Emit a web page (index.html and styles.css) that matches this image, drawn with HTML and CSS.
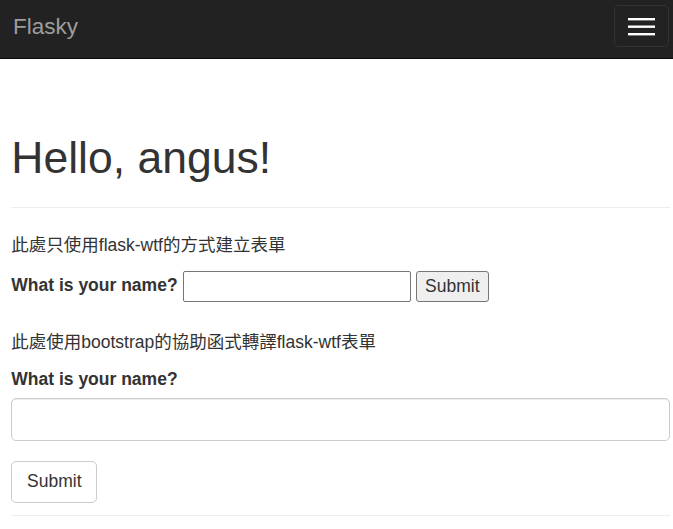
FILE: index.html
```html
<!DOCTYPE html>
<html lang="zh-Hant">
<head>
<meta charset="utf-8">
<title>Flasky</title>
<link rel="stylesheet" href="styles.css">
</head>
<body>
<nav class="navbar">
  <a class="brand" href="#">Flasky</a>
  <button class="toggle" type="button" aria-label="Toggle navigation">
    <svg width="27" height="20" viewBox="0 0 27 20" aria-hidden="true">
      <rect x="0" y="1" width="27" height="2.4" fill="#fff"/>
      <rect x="0" y="8.5" width="27" height="2.4" fill="#fff"/>
      <rect x="0" y="16" width="27" height="2.4" fill="#fff"/>
    </svg>
  </button>
</nav>
<main class="container">
  <div class="page-header">
    <h1>Hello, angus!</h1>
  </div>
  <p class="note">此處只使用flask-wtf的方式建立表單</p>
  <form class="plain-form">
    <label class="plain-label" for="name1">What is your name?</label>
    <input class="plain-input" id="name1" type="text">
    <input class="plain-submit" type="submit" value="Submit">
  </form>
  <p class="note note2">此處使用bootstrap的協助函式轉譯flask-wtf表單</p>
  <form class="bs-form">
    <label class="bs-label" for="name2">What is your name?</label>
    <input class="form-control" id="name2" type="text">
    <input class="btn-default" type="submit" value="Submit">
  </form>
  <hr class="rule">
</main>
</body>
</html>
```
FILE: styles.css
```css
* { box-sizing: border-box; }
html, body { margin: 0; padding: 0; }
body {
  font-family: "Liberation Sans", Arial, "Noto Sans CJK TC", sans-serif;
  font-size: 17.5px;
  line-height: 25px;
  color: #333;
  background: #fff;
}
.navbar {
  height: 59px;
  background: #222;
  border-bottom: 1px solid #080808;
  display: flex;
  align-items: flex-start;
  justify-content: space-between;
  padding: 0 4px 0 13px;
}
.brand {
  display: block;
  font-size: 22.5px;
  line-height: 25px;
  padding-top: 14px;
  color: #9d9d9d;
  text-decoration: none;
}
.toggle {
  margin-top: 5px;
  width: 55px;
  height: 42px;
  background: transparent;
  border: 1px solid #333;
  border-radius: 5px;
  padding: 0;
  display: flex;
  align-items: center;
  justify-content: center;
}
.toggle svg { display: block; margin-top: 1px; }
.container {
  padding: 0 3.5px 0 11.3px;
}
.page-header {
  padding-top: 75px;
  padding-bottom: 24.6px;
  border-bottom: 1px solid #eee;
  margin-bottom: 25px;
}
h1 {
  margin: 0;
  font-size: 44.5px;
  line-height: 48.4px;
  font-weight: 500;
}
.note {
  margin: 0 0 12.5px;
}
.note2 { margin-top: 28px; margin-bottom: 11.7px; }
.plain-form {
  display: flex;
  align-items: center;
  height: 31.5px;
}
.plain-label {
  font-weight: bold;
  margin-right: 5px;
  margin-bottom: 1px;
}
.plain-input {
  width: 228px;
  height: 31.5px;
  border: 1px solid #767676;
  border-radius: 2px;
  padding: 1px 2px;
  font: inherit;
  margin: 0 5px 0 0;
}
.plain-submit {
  height: 31.5px;
  width: 73.5px;
  padding: 0;
  font: inherit;
  color: #333;
  background: #efefef;
  border: 1px solid #767676;
  border-radius: 3px;
  margin: 0;
}
.bs-form { display: block; }
.bs-label {
  display: block;
  font-weight: bold;
  margin-bottom: 6.8px;
}
.form-control {
  display: block;
  width: 100%;
  height: 42.5px;
  padding: 7.5px 15px;
  font: inherit;
  color: #555;
  background: #fff;
  border: 1px solid #ccc;
  border-radius: 5px;
  box-shadow: inset 0 1px 1px rgba(0,0,0,.075);
  margin: 0 0 19.8px;
}
.btn-default {
  display: block;
  height: 42px;
  width: 86px;
  padding: 0;
  font: inherit;
  color: #333;
  background: #fff;
  border: 1px solid #ccc;
  border-radius: 5px;
  margin: 0;
}
.rule {
  margin: 12.6px 0 0;
  border: 0;
  border-top: 1px solid #eee;
}
```
